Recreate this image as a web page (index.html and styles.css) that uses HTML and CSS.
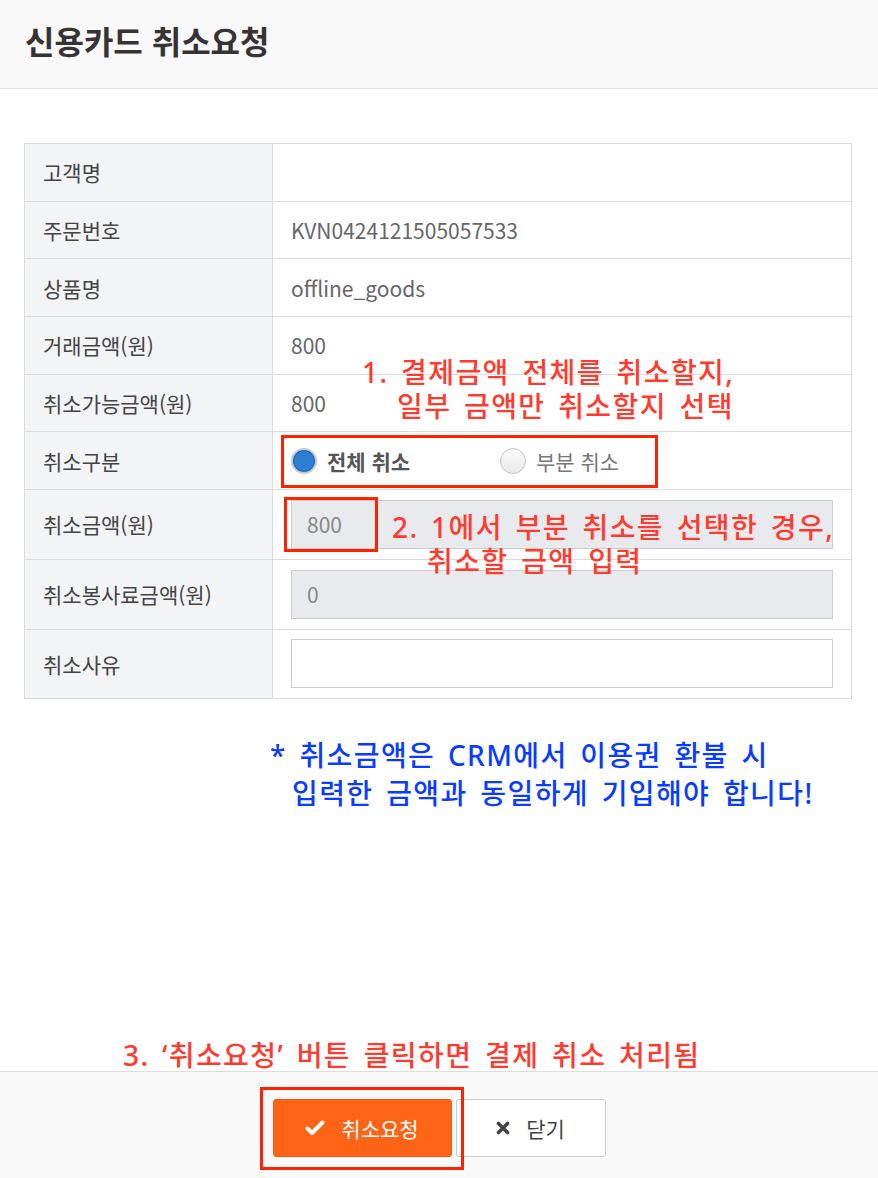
FILE: index.html
```html
<!DOCTYPE html>
<html lang="ko">
<head>
    <meta charset="UTF-8">
    <meta name="viewport" content="width=device-width, initial-scale=1.0">
    <title>신용카드 취소요청</title>
    <link rel="stylesheet" href="styles.css">
</head>
<body>
    <div class="popup">
        <header class="popup-head">
            <h1>신용카드 취소요청</h1>
        </header>

        <div class="popup-body">
            <table class="form-table">
                <tr>
                    <th>고객명</th>
                    <td></td>
                </tr>
                <tr>
                    <th>주문번호</th>
                    <td>KVN0424121505057533</td>
                </tr>
                <tr>
                    <th>상품명</th>
                    <td>offline_goods</td>
                </tr>
                <tr>
                    <th>거래금액(원)</th>
                    <td>800</td>
                </tr>
                <tr>
                    <th>취소가능금액(원)</th>
                    <td>800</td>
                </tr>
                <tr>
                    <th>취소구분</th>
                    <td>
                        <div class="radio-group">
                            <label class="radio checked"><span class="dot"></span>전체 취소</label>
                            <label class="radio"><span class="dot"></span>부분 취소</label>
                        </div>
                    </td>
                </tr>
                <tr class="input-row">
                    <th>취소금액(원)</th>
                    <td><input type="text" class="field" value="800" disabled></td>
                </tr>
                <tr class="input-row">
                    <th>취소봉사료금액(원)</th>
                    <td><input type="text" class="field" value="0" disabled></td>
                </tr>
                <tr class="input-row">
                    <th>취소사유</th>
                    <td><input type="text" class="field"></td>
                </tr>
            </table>

            <p class="note">* 취소금액은 CRM에서 이용권 환불 시<br><span class="note-indent">입력한 금액과 동일하게 기입해야 합니다!</span></p>
        </div>

        <footer class="popup-foot">
            <button class="btn btn-primary">
                <svg width="20" height="16" viewBox="0 0 20 16"><path d="M2.5 8.5l4.5 4.5L17.5 2.5" fill="none" stroke="#fff" stroke-width="4" stroke-linecap="round" stroke-linejoin="round"/></svg>
                취소요청
            </button>
            <button class="btn btn-default">
                <svg width="14" height="14" viewBox="0 0 14 14"><path d="M2.5 2.5l9 9M11.5 2.5l-9 9" stroke="#444" stroke-width="3.6" stroke-linecap="round"/></svg>
                닫기
            </button>
        </footer>

        <!-- 안내 표시 -->
        <p class="guide guide-1">1. 결제금액 전체를 취소할지,<br><span class="guide-indent">일부 금액만 취소할지 선택</span></p>
        <p class="guide guide-2">2. 1에서 부분 취소를 선택한 경우,<br><span class="guide-indent">취소할 금액 입력</span></p>
        <p class="guide guide-3">3. ‘취소요청’ 버튼 클릭하면 결제 취소 처리됨</p>
        <div class="mark mark-1"></div>
        <div class="mark mark-2"></div>
        <div class="mark mark-3"></div>
    </div>
</body>
</html>
```

FILE: styles.css
```css
* {
    box-sizing: border-box;
}
body {
    margin: 0;
    font-family: "Noto Sans CJK KR", "Noto Sans", sans-serif;
    color: #444;
    background-color: #fff;
}
.popup {
    position: relative;
    width: 878px;
    height: 1178px;
    display: flex;
    flex-direction: column;
    overflow: hidden;
}
.popup-head {
    height: 89px;
    background-color: #f9f9f9;
    border-bottom: 1px solid #e3e3e3;
    display: flex;
    align-items: center;
    padding: 0 0 8px 25px;
}
.popup-head h1 {
    margin: 0;
    font-size: 32px;
    font-weight: 700;
    color: #383333;
}
.popup-body {
    flex: 1;
    padding: 54px 26px 0 24px;
}
.form-table {
    width: 100%;
    border-collapse: collapse;
    border: 1px solid #dcdcdc;
    font-size: 21px;
}
.form-table th,
.form-table td {
    border: 1px solid #dcdcdc;
    height: 57.7px;
    padding: 0 18px;
    text-align: left;
}
.form-table th {
    width: 248px;
    background-color: #f3f4f6;
    font-weight: 400;
    color: #444;
}
.form-table td {
    color: #666;
}
.form-table .input-row th,
.form-table .input-row td {
    height: 69.7px;
}
.field {
    width: 100%;
    height: 49px;
    padding: 0 15px;
    border: 1px solid #cccccc;
    background-color: #fff;
    font-family: inherit;
    font-size: 21px;
    color: #888;
}
.field:disabled {
    background-color: #e8eaed;
}
.radio-group {
    display: flex;
    align-items: center;
}
.radio {
    display: flex;
    align-items: center;
    gap: 10px;
    width: 209px;
    color: #777;
}
.radio.checked {
    font-weight: 700;
    color: #555;
}
.dot {
    width: 26px;
    height: 26px;
    border-radius: 50%;
    border: 1px solid #c4c4c4;
    background: linear-gradient(#fafafa, #e8e8e8);
}
.radio.checked .dot {
    border: 2px solid #c8c8c8;
    background: #2c7fd4;
    box-shadow: inset 0 0 0 1px #1f68b8;
}
.note {
    margin: 37px 0 0 246px;
    font-family: "Noto Sans", "Noto Sans CJK KR", sans-serif;
    font-size: 28px;
    font-weight: 500;
    line-height: 38px;
    letter-spacing: 1.4px;
    word-spacing: 4px;
    color: #0a3cff;
}
.note-indent {
    padding-left: 22px;
}
.popup-foot {
    height: 107px;
    border-top: 1px solid #dddddd;
    background-color: #f9f9f9;
    display: flex;
    justify-content: center;
    align-items: flex-start;
    gap: 4px;
    padding-top: 27px;
}
.btn {
    height: 58px;
    display: flex;
    align-items: center;
    justify-content: center;
    gap: 16px;
    font-family: inherit;
    font-size: 21px;
    border-radius: 3px;
    cursor: pointer;
}
.btn-primary {
    width: 179px;
    background-color: #ff6316;
    border: 1px solid #f55a10;
    color: #fff;
}
.btn-default {
    width: 150px;
    background-color: #fff;
    border: 1px solid #cccccc;
    color: #444;
}
.guide {
    position: absolute;
    margin: 0;
    font-family: "Noto Sans", "Noto Sans CJK KR", sans-serif;
    font-size: 28px;
    font-weight: 500;
    line-height: 34px;
    letter-spacing: 1.4px;
    word-spacing: 4px;
    color: #ff3a2e;
    white-space: nowrap;
}
.guide-1 {
    left: 362px;
    top: 355px;
}
.guide-2 {
    left: 392px;
    top: 510px;
}
.guide-3 {
    left: 123px;
    top: 1038px;
}
.guide-indent {
    padding-left: 35px;
}
.mark {
    position: absolute;
    border: 3px solid #ff2200;
}
.mark-1 {
    left: 281px;
    top: 435px;
    width: 377px;
    height: 53px;
}
.mark-2 {
    left: 284px;
    top: 497px;
    width: 94px;
    height: 55px;
}
.mark-3 {
    left: 260px;
    top: 1087px;
    width: 204px;
    height: 83px;
}
```
